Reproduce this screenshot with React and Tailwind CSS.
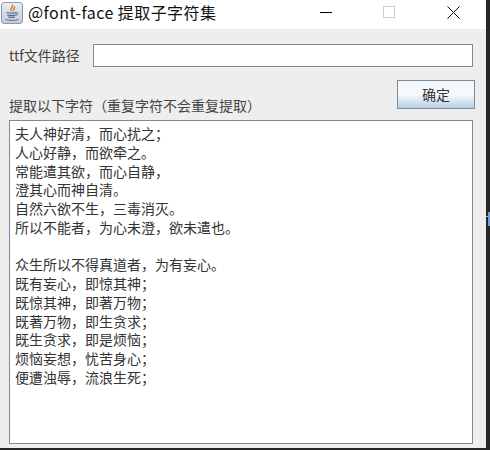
import React from "react";

const cjk = { fontFamily: '"Noto Sans CJK SC", "Noto Sans", sans-serif' };

const C = "\uFF0C";
const S = "\uFF1B";

const lines = [
  `夫人神好清${C}而心扰之${S}`,
  `人心好静${C}而欲牵之。`,
  `常能遣其欲${C}而心自静${C}`,
  "澄其心而神自清。",
  `自然六欲不生${C}三毒消灭。`,
  `所以不能者${C}为心未澄${C}欲未遣也。`,
  "",
  `众生所以不得真道者${C}为有妄心。`,
  `既有妄心${C}即惊其神${S}`,
  `既惊其神${C}即著万物${S}`,
  `既著万物${C}即生贪求${S}`,
  `既生贪求${C}即是烦恼${S}`,
  `烦恼妄想${C}忧苦身心${S}`,
  `便遭浊辱${C}流浪生死${S}`,
];

function JavaIcon() {
  return (
    <div className="w-[22px] h-[22px] rounded-[3px] border border-[#8a9aaa] bg-gradient-to-b from-[#e8edf2] to-[#c3ccd6] flex items-center justify-center">
      <svg width="16" height="18" viewBox="0 0 16 18" fill="none">
        <path d="M8.5 1c1 2-2.5 3-1.5 5.5M10.5 3c.6 1.500-1.800 2-1 3.700" stroke="#e07a1f" strokeWidth="1.400" strokeLinecap="round" />
        <path d="M3 8.500c2 .8 7 .8 9 0M3.500 11c2 .7 6.500.7 8 0M4.500 13c1.500.5 4.500.5 6 0" stroke="#4d6f8f" strokeWidth="1.200" strokeLinecap="round" />
        <path d="M12 8.700c2-.6 2.800 1.500.3 2.600" stroke="#4d6f8f" strokeWidth="1" strokeLinecap="round" />
        <path d="M2 15.500c3 1.200 9 1.200 12 0" stroke="#5f7f9c" strokeWidth="1.200" strokeLinecap="round" />
      </svg>
    </div>
  );
}

function TitleBar() {
  return (
    <div className="h-[29px] bg-white flex items-center shrink-0">
      <div className="pl-px pr-[5px] pb-[3px]">
        <JavaIcon />
      </div>
      <span className="text-[16px] leading-[24px] text-[#111] pb-[5px] tracking-[0.45px] flex-1" style={cjk}>
        @font-face 提取子字符集
      </span>
      <div className="flex items-center pb-[5px]">
        <div className="w-[12px] h-px bg-black mr-[51px]" />
        <div className="w-[12px] h-[12px] border border-[#cccccc] mr-[52px]" />
        <svg width="13" height="13" viewBox="0 0 13 13" className="mr-[26px]">
          <path d="M.5.5l12 12M12.500.5l-12 12" stroke="#111" strokeWidth="1" />
        </svg>
      </div>
    </div>
  );
}

export default function App() {
  return (
    <div className="relative w-[490px] h-[450px] bg-[#262626] overflow-hidden text-[14px] text-[#444444]" style={cjk}>
      <div className="absolute left-[488px] top-[212px] w-[2px] h-[14px] bg-[#6f9fe0]" />
      <div className="absolute left-[486px] top-[216px] w-[2px] h-px bg-[#9fb4cc]" />
      <div className="w-[486px] h-[448px] bg-[#eeeeee] flex flex-col">
        <TitleBar />
        <div className="flex items-center pl-[9px] pr-[13px] pt-[15px]">
          <label className="w-[84px] leading-[23px]">ttf文件路径</label>
          <div className="flex-1 h-[23px] bg-white border border-[#7a8a99]" />
        </div>
        <div className="flex items-start justify-between pl-[9px] pr-[11px] pt-[13px]">
          <span className="leading-[20px] pt-[15px]">{"提取以下字符\uFF08重复字符不会重复提取\uFF09"}</span>
          <button className="w-[78px] h-[29px] border border-[#7a8a99] bg-gradient-to-b from-[#f2f6fa] via-[#f7fafd] to-[#b8cfe5] text-[14px] text-[#333]" style={cjk}>
            确定
          </button>
        </div>
        <div className="ml-[9px] mr-[13px] mt-[5px] h-[324px] bg-white border border-[#7a8a99] pl-[5px] pt-[3px] text-[14px] leading-[18.75px] text-[#333]">
          {lines.map((l, i) => (
            <div key={i} className="h-[18.75px] whitespace-pre">{l}</div>
          ))}
        </div>
      </div>
    </div>
  );
}
